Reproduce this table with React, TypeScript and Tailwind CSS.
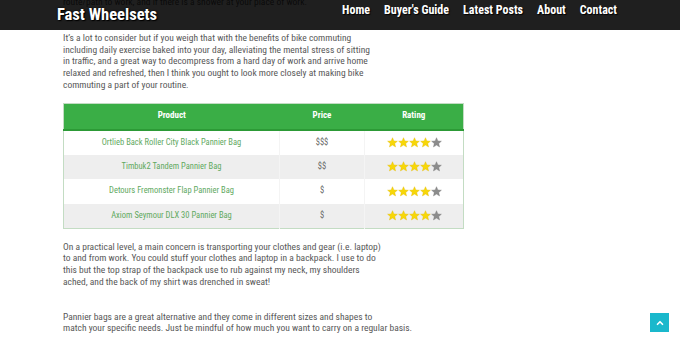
import { ChevronUp } from 'lucide-react';

const rows = [
  { name: 'Ortlieb Back Roller City Black Pannier Bag', price: '$$$' },
  { name: 'Timbuk2 Tandem Pannier Bag', price: '$$' },
  { name: 'Detours Fremonster Flap Pannier Bag', price: '$' },
  { name: 'Axiom Seymour DLX 30 Pannier Bag', price: '$' },
];

function Star({ on }: { on: boolean }) {
  return (
    <svg viewBox="0 0 24 24" className="h-[11px] w-[11px]">
      <path
        d="M12 1.5l3.1 7.1 7.6.6-5.8 5 1.8 7.5L12 17.7l-6.7 4 1.8-7.5-5.8-5 7.6-.6z"
        fill={on ? '#f7d708' : '#8c8c8c'}
        stroke={on ? '#e0b800' : '#777'}
        strokeWidth="0.8"
      />
    </svg>
  );
}

export default function App() {
  return (
    <div className="relative h-[338px] w-[680px] overflow-hidden bg-white font-['Roboto_Condensed',Lato,sans-serif] text-[#585858]">
      {/* fixed top bar, see-through over the scrolled text */}
      <header className="absolute inset-x-0 top-0 z-10 flex h-[30px] items-start justify-between bg-black/[0.88] pl-[57px] pr-[63px]">
        <div className="mt-[3px] text-[16.5px] font-bold text-white [text-shadow:0_0_2px_#000,1px_1px_1px_#000]">
          Fast Wheelsets
        </div>
        <nav className="mt-[1px] flex gap-[14px] text-[12px] font-bold text-white [text-shadow:1px_1px_1px_#000]">
          {['Home', "Buyer's Guide", 'Latest Posts', 'About', 'Contact'].map((n) => (
            <a key={n} href="#">{n}</a>
          ))}
        </nav>
      </header>

      <main className="-mt-[4px] w-[540px] pl-[63px] text-[9.5px] leading-[11.75px]">
        <p>route/path to work, and if there is a shower at your place of work.</p>
        <p className="mt-[24px]">
          It’s a lot to consider but if you weigh that with the benefits of bike commuting<br />
          including daily exercise baked into your day, alleviating the mental stress of sitting<br />
          in traffic, and a great way to decompress from a hard day of work and arrive home<br />
          relaxed and refreshed, then I think you ought to look more closely at making bike<br />
          commuting a part of your routine.
        </p>

        <table className="mt-[12px] w-[401px] border border-[#c3dcc3] text-center text-[8.5px]">
          <thead>
            <tr className="h-[27px] border-b-2 border-[#2c9a36] bg-[#3aae46] text-[9px] font-bold text-white">
              <th className="w-[216px]">Product</th>
              <th className="w-[85px]">Price</th>
              <th>Rating</th>
            </tr>
          </thead>
          <tbody>
            {rows.map((r, i) => (
              <tr key={r.name} className={`h-[24.5px] ${i % 2 ? 'bg-[#eeeeee]' : 'bg-white'}`}>
                <td className="border-r border-[#f4f4f4] text-[#5fa95f]">{r.name}</td>
                <td className="border-r border-[#f4f4f4] text-[#666]">{r.price}</td>
                <td>
                  <div className="flex justify-center">
                    {[0, 1, 2, 3, 4].map((s) => (
                      <Star key={s} on={s < 4} />
                    ))}
                  </div>
                </td>
              </tr>
            ))}
          </tbody>
        </table>

        <p className="mt-[12px]">
          On a practical level, a main concern is transporting your clothes and gear (i.e. laptop)<br />
          to and from work. You could stuff your clothes and laptop in a backpack. I use to do<br />
          this but the top strap of the backpack use to rub against my neck, my shoulders<br />
          ached, and the back of my shirt was drenched in sweat!
        </p>
        <p className="mt-[23px]">
          Pannier bags are a great alternative and they come in different sizes and shapes to<br />
          match your specific needs. Just be mindful of how much you want to carry on a regular basis.
        </p>
      </main>

      <button className="absolute bottom-[6px] right-[11px] flex h-[19px] w-[19px] items-center justify-center bg-[#1ab8cc] text-white">
        <ChevronUp className="h-[10px] w-[10px]" strokeWidth={4} />
      </button>
    </div>
  );
}
